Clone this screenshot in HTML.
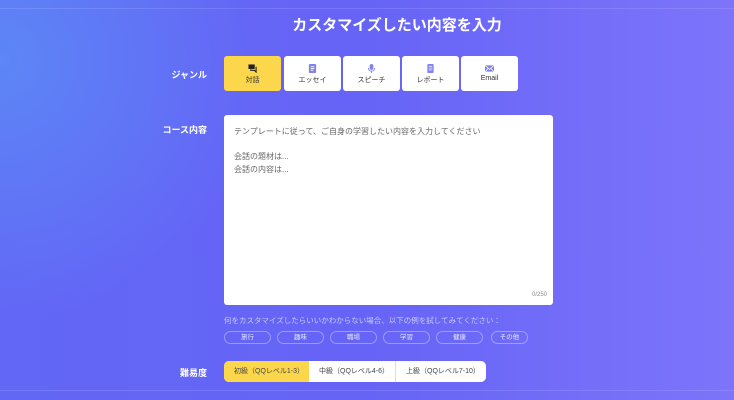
<!DOCTYPE html>
<html><head><meta charset="utf-8"><style>
*{margin:0;padding:0;box-sizing:border-box}
body{width:734px;height:400px;overflow:hidden;font-family:"Liberation Sans","Noto Sans CJK JP",sans-serif;
background:radial-gradient(ellipse 260px 260px at 0px 60px,#5d86f7 0%,rgba(93,134,247,0) 100%),linear-gradient(90deg,#6267f5 0%,#6664f6 50%,#7d74fb 100%);position:relative;color:#fff}
.line{position:absolute;left:0;right:0;height:1px;background:rgba(255,255,255,.12)}
.abs{position:absolute}
h1{position:absolute;left:0;width:734px;top:14px;text-align:center;font-size:15px;font-weight:bold;padding-left:60px}
.lbl{position:absolute;font-size:9px;font-weight:bold;width:50px;text-align:right}
.g{position:absolute;top:56px;width:57px;height:35px;background:#fff;border-radius:3px;color:#333;font-size:7px;text-align:center}
.g .ic{display:block;margin:8px auto 2px;width:9px;height:9px}
.g.sel{background:#fdd74b}
.ta{position:absolute;left:224px;top:115px;width:329px;height:190px;background:#fff;border-radius:3px;color:#666;font-size:8px;padding:11px 10px;line-height:12.5px}
.tag{position:absolute;top:331px;height:13px;border:1px solid rgba(255,255,255,.35);border-radius:7px;font-size:6.5px;text-align:center;line-height:11px;color:#e8e8ff}
.lv{position:absolute;top:361px;height:21px;background:#fff;border-radius:5px;left:224px;width:262px;display:flex;overflow:hidden;font-size:7px;color:#444}
.lv div{line-height:21px;padding-left:10px;border-right:1px solid #ddd}
</style></head><body>
<div class="line" style="top:8px"></div>
<div class="line" style="top:390px"></div>
<h1>カスタマイズしたい内容を入力</h1>
<div class="lbl" style="left:157px;top:68px">ジャンル</div>
<div class="g sel" style="left:224px"><svg class="ic" viewBox="0 0 10 10"><rect x="0.5" y="0.5" width="7" height="5" fill="#222"/><path d="M9 3v6l-2-2H3V6" fill="none" stroke="#222" stroke-width="1.2"/></svg>対話</div>
<div class="g" style="left:284px"><svg class="ic" viewBox="0 0 10 10"><rect x="1" y="0" width="8" height="10" rx="1" fill="#7f82ee"/><path d="M3 3h4M3 5h4M3 7h3" stroke="#fff"/></svg>エッセイ</div>
<div class="g" style="left:343px"><svg class="ic" viewBox="0 0 10 10"><rect x="3" y="0" width="4" height="6.5" rx="2" fill="#7f82ee"/><path d="M1.5 4.5a3.5 3.5 0 007 0M5 8v2" fill="none" stroke="#7f82ee"/></svg>スピーチ</div>
<div class="g" style="left:402px"><svg class="ic" viewBox="0 0 10 10"><rect x="1.5" y="0" width="7" height="10" rx="1" fill="#7f82ee"/><path d="M3 2.5h4M3 4.5h4M3 6.5h4" stroke="#fff" stroke-width=".8"/></svg>レポート</div>
<div class="g" style="left:461px"><svg class="ic" viewBox="0 0 10 10"><rect x="0" y="1.5" width="10" height="7" rx="1" fill="#7f82ee"/><path d="M0.5 2l4.5 4 4.5-4M0.5 8l3-3M9.5 8l-3-3" fill="none" stroke="#fff" stroke-width=".8"/></svg>Email</div>
<div class="lbl" style="left:157px;top:123px">コース内容</div>
<div class="ta">テンプレートに従って、ご自身の学習したい内容を入力してください<br><br>会話の題材は...<br>会話の内容は...<div class="abs" style="right:6px;bottom:4px;font-size:6px;color:#888">0/250</div></div>
<div class="abs" style="left:224px;top:315px;font-size:7.5px;color:#c9c9ff">何をカスタマイズしたらいいかわからない場合、以下の例を試してみてください：</div>
<div class="tag" style="left:224px;width:47px">旅行</div>
<div class="tag" style="left:277px;width:47px">趣味</div>
<div class="tag" style="left:330px;width:47px">職場</div>
<div class="tag" style="left:383px;width:47px">学習</div>
<div class="tag" style="left:436px;width:47px">健康</div>
<div class="tag" style="left:491px;width:37px">その他</div>
<div class="lbl" style="left:157px;top:366px">難易度</div>
<div class="lv"><div style="width:85px;background:#fdd74b;border:none">初級（QQレベル1-3）</div><div style="width:87px">中級（QQレベル4-6）</div><div style="width:90px;border:none">上級（QQレベル7-10）</div></div>
</body></html>
